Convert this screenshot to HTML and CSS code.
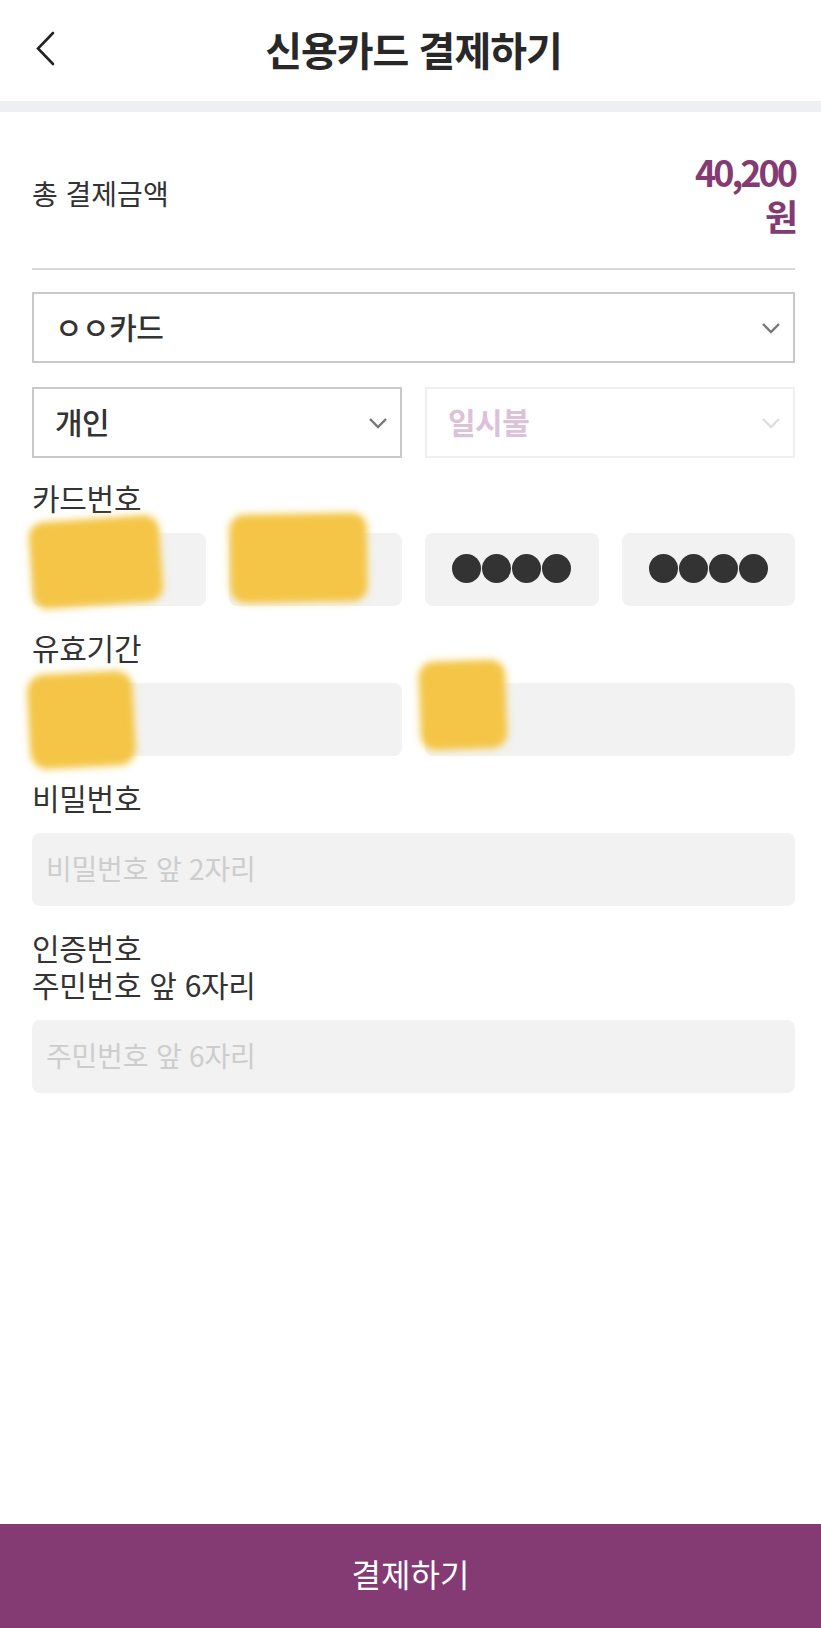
FILE: index.html
```html
<!DOCTYPE html>
<html lang="ko">
<head>
<meta charset="utf-8">
<title>신용카드 결제하기</title>
<link rel="stylesheet" href="styles.css">
</head>
<body>
<div class="page">
  <header class="topbar">
    <button class="back" aria-label="뒤로">
      <svg width="22" height="36" viewBox="0 0 22 36"><path d="M18 2 L3 17.5 L18 33" fill="none" stroke="#222" stroke-width="2.6" stroke-linecap="round" stroke-linejoin="miter"/></svg>
    </button>
    <h1 class="title">신용카드 결제하기</h1>
  </header>
  <div class="band"></div>

  <main class="content">
    <section class="summary">
      <span class="summary-label">총 결제금액</span>
      <span class="summary-amount">40,200 원</span>
    </section>

    <div class="select select-full">
      <span class="select-text">ㅇㅇ카드</span>
      <svg class="chev" width="20" height="12" viewBox="0 0 20 12"><path d="M2 2 L10 10 L18 2" fill="none" stroke="#777" stroke-width="2.4"/></svg>
    </div>

    <div class="select-row">
      <div class="select">
        <span class="select-text">개인</span>
        <svg class="chev" width="20" height="12" viewBox="0 0 20 12"><path d="M2 2 L10 10 L18 2" fill="none" stroke="#777" stroke-width="2.4"/></svg>
      </div>
      <div class="select disabled">
        <span class="select-text strong">일시불</span>
        <svg class="chev" width="20" height="12" viewBox="0 0 20 12"><path d="M2 2 L10 10 L18 2" fill="none" stroke="#dddddd" stroke-width="2.4"/></svg>
      </div>
    </div>

    <div class="field">
      <div class="label">카드번호</div>
      <div class="grid4">
        <div class="input"></div>
        <div class="input"></div>
        <div class="input masked"><i></i><i></i><i></i><i></i></div>
        <div class="input masked"><i></i><i></i><i></i><i></i></div>
      </div>
    </div>

    <div class="field">
      <div class="label">유효기간</div>
      <div class="grid2">
        <div class="input"></div>
        <div class="input"></div>
      </div>
    </div>

    <div class="field">
      <div class="label">비밀번호</div>
      <div class="input"><span class="placeholder">비밀번호 앞 2자리</span></div>
    </div>

    <div class="field">
      <div class="label">인증번호<br>주민번호 앞 6자리</div>
      <div class="input"><span class="placeholder">주민번호 앞 6자리</span></div>
    </div>

    <div class="blob blob1"></div>
    <div class="blob blob2"></div>
    <div class="blob blob3"></div>
    <div class="blob blob4"></div>
  </main>

  <button class="pay">결제하기</button>
</div>
</body>
</html>
```

FILE: styles.css
```css
* { box-sizing: border-box; }
html, body { margin: 0; padding: 0; background: #fff; }
body {
  font-family: "Noto Sans CJK KR", "Noto Sans", sans-serif;
  color: #333;
}
.page {
  min-height: 100vh;
  display: flex;
  flex-direction: column;
}
.topbar {
  height: 101px;
  position: relative;
  display: flex;
  align-items: center;
  justify-content: center;
}
.back {
  position: absolute;
  left: 35px;
  top: 31px;
  border: 0;
  padding: 0;
  background: none;
  width: 22px;
  height: 36px;
}
.back svg { display: block; }
.title {
  margin: 0;
  font-size: 40px;
  font-weight: 700;
  letter-spacing: -1px;
  color: #282828;
  line-height: 1;
  padding-left: 6px;
  padding-bottom: 4px;
}
.band { height: 11px; background: #eeeff1; }

.content {
  position: relative;
  padding: 0 26px 0 32px;
  display: flex;
  flex-direction: column;
}
.summary {
  display: flex;
  justify-content: space-between;
  align-items: center;
  padding: 37px 0 31px;
  border-bottom: 2px solid #d9d9d9;
}
.summary-label {
  font-size: 28px;
  letter-spacing: 0;
  color: #333;
}
.summary-amount {
  width: min-content;
  text-align: right;
  font-size: 36px;
  font-weight: 700;
  line-height: 44px;
  letter-spacing: -3px;
  color: #843a72;
}

.select {
  height: 71px;
  border: 2px solid #c9c9c9;
  display: flex;
  align-items: center;
  justify-content: space-between;
  padding: 0 12px 0 21px;
}
.select-full { margin-top: 22px; }
.select-text {
  font-size: 30px;
  font-weight: 500;
  color: #333;
  letter-spacing: -0.5px;
  padding-bottom: 4px;
}
.select-text.strong { font-weight: 700; }
.chev { display: block; }
.select-row {
  margin-top: 24px;
  display: grid;
  grid-template-columns: 1fr 1fr;
  gap: 23px;
}
.select.disabled { border-color: #efefef; }
.select.disabled .select-text { color: #dcc2d8; }

.field { margin-top: 21px; }
.field + .field { margin-top: 23px; }
.label {
  font-size: 30px;
  line-height: 37px;
  color: #333;
  letter-spacing: -0.3px;
  margin-bottom: 17px;
}
.input {
  height: 73px;
  background: #f2f2f2;
  border-radius: 8px;
  display: flex;
  align-items: center;
  padding: 0 14px;
}
.placeholder {
  font-size: 28px;
  color: #cdcdcd;
  letter-spacing: -0.2px;
  padding-bottom: 4px;
}
.grid4 {
  display: grid;
  grid-template-columns: repeat(4, 1fr);
  gap: 23px;
}
.grid2 {
  display: grid;
  grid-template-columns: 1fr 1fr;
  gap: 23px;
}
.masked {
  justify-content: center;
  gap: 1px;
  padding-bottom: 3px;
}
.masked i {
  width: 29px;
  height: 29px;
  border-radius: 50%;
  background: #333;
}

.blob {
  position: absolute;
  background: #f4c546;
  border-radius: 14px;
  filter: blur(3px);
  box-shadow: 0 0 4px 2px rgba(246, 210, 100, 0.8);
}
.blob1 { left: 32px; top: 408px; width: 128px; height: 84px; transform: rotate(-4deg); }
.blob2 { left: 231px; top: 403px; width: 135px; height: 86px; transform: rotate(-1deg); }
.blob3 { left: 30px; top: 562px; width: 103px; height: 92px; transform: rotate(-3deg); border-radius: 16px; }
.blob4 { left: 421px; top: 550px; width: 84px; height: 86px; transform: rotate(-2deg); border-radius: 14px; }

.pay {
  margin-top: auto;
  height: 104px;
  border: 0;
  background: #843a72;
  color: #fff;
  font-family: "Noto Sans CJK KR", "Noto Sans", sans-serif;
  font-size: 32px;
  letter-spacing: 0;
  padding-bottom: 8px;
  width: 100%;
}
```
